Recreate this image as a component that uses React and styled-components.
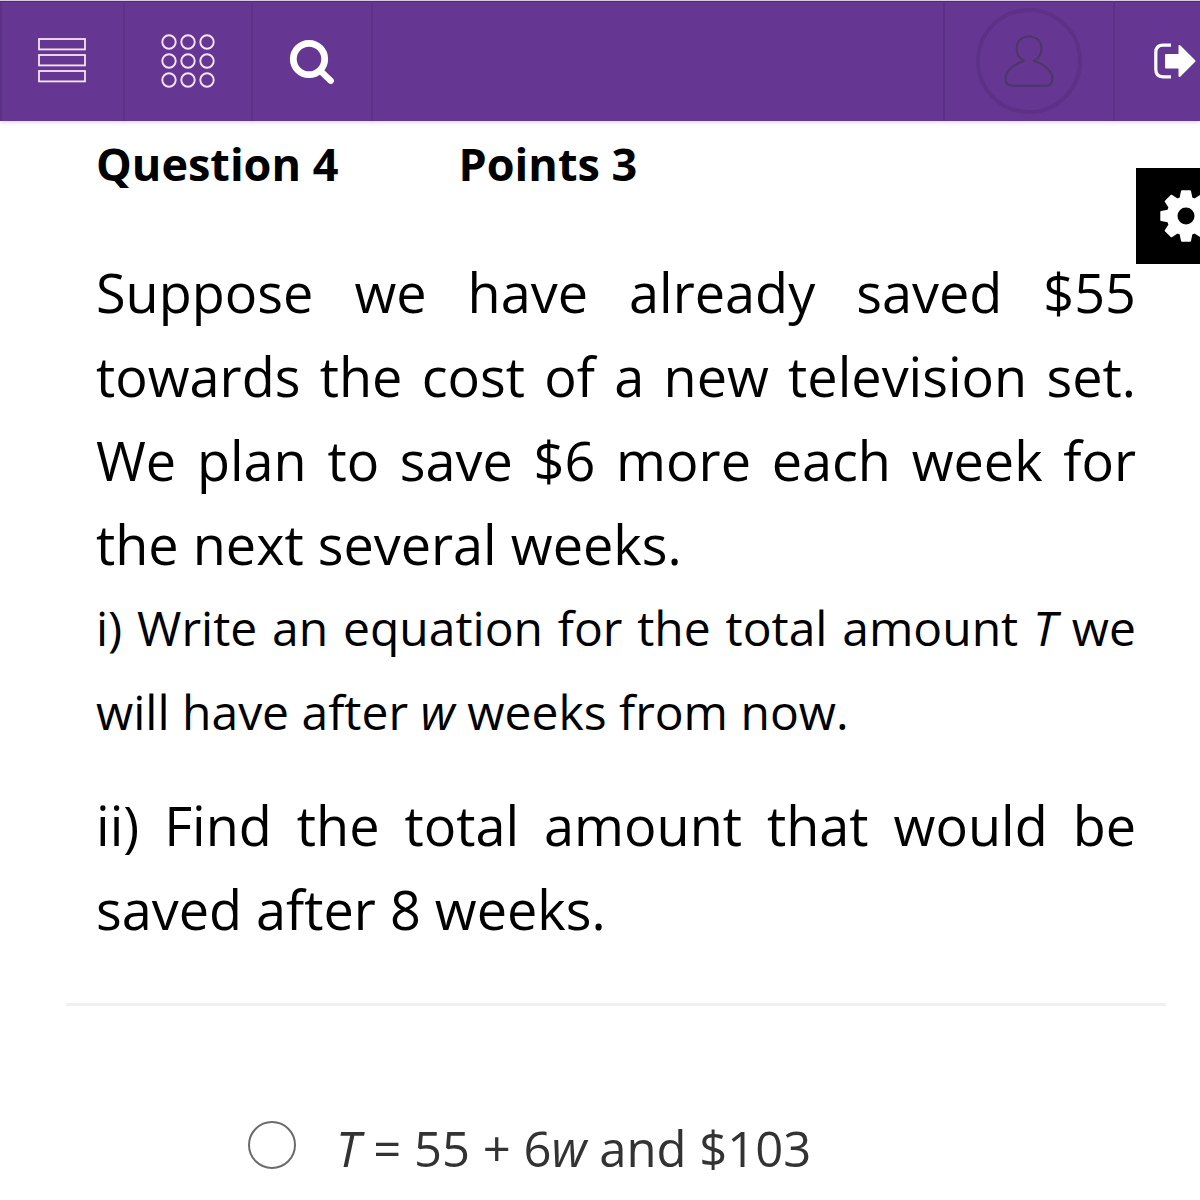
import React from 'react';
import styled, { createGlobalStyle } from 'styled-components'

const answers = [
    { id: 'a', variable: 'T', middle: '= 55 + 6', second: 'w', end: 'and $103' },
]

const teeth = [0, 45, 90, 135, 180, 225, 270, 315]
const dots = [8, 27, 46]

const ListIcon = () => (
    <svg width="48" height="46" viewBox="0 0 48 46" fill="none" stroke="#f8e4fa" strokeWidth="1.8">
        <rect x="1" y="1" width="46" height="10.4" />
        <rect x="1" y="17" width="46" height="10.4" />
        <rect x="1" y="33" width="46" height="10.4" />
    </svg>
)

const GridIcon = () => (
    <svg width="54" height="54" viewBox="0 0 54 54" fill="none" stroke="#f8e4fa" strokeWidth="1.9">
        {dots.map(y => dots.map(x => <circle key={x + '-' + y} cx={x} cy={y} r="6.7" />))}
    </svg>
)

const SearchIcon = () => (
    <svg width="46" height="46" viewBox="0 0 46 46" fill="none" stroke="#fff">
        <circle cx="20" cy="21" r="15.7" strokeWidth="6.8" />
        <path d="M32 33.5 L41.7 42.7" strokeWidth="6.4" strokeLinecap="round" />
    </svg>
)

const UserIcon = () => (
    <svg width="50" height="54" viewBox="0 0 50 54" fill="none" stroke="#4d3763" strokeWidth="2" strokeLinejoin="round">
        <path d="M20.5 26.8 C15 24.5 12.5 20 12.5 14.6 C12.5 7.2 17.6 2.4 25 2.4 C32.4 2.4 37.5 7.2 37.5 14.6 C37.5 20 35 24.5 29.5 26.8 C41.5 30.5 48.5 38 48.5 44.5 C48.5 49.5 46 51.8 41 51.8 H9 C4 51.8 1.5 49.5 1.5 44.5 C1.5 38 8.5 30.5 20.5 26.8" />
    </svg>
)

const LogoutIcon = () => (
    <svg width="42" height="36" viewBox="0 0 42 36">
        <path d="M17 2.2 H9 Q1.8 2.2 1.8 9.4 V26.6 Q1.8 33.8 9 33.8 H17" fill="none" stroke="#fff" strokeWidth="3.2" />
        <path d="M12 12 H25.5 V3 L40.5 18 L25.5 33 V24.5 H12 Z" fill="#fff" stroke="#fff" strokeWidth="2" strokeLinejoin="round" />
    </svg>
)

const GearIcon = () => (
    <svg width="52" height="52" viewBox="-26 -26 52 52" fill="#fff">
        <circle r="19.5" />
        {teeth.map(angle => (
            <path key={angle} d="M-6.6 -17 L-5 -25 Q-4.8 -25.7 -4 -25.7 H4 Q4.8 -25.7 5 -25 L6.6 -17 Z" transform={`rotate(${angle})`} />
        ))}
        <circle r="8.5" fill="#000" />
    </svg>
)

function TopBar() {
    return (
        <Bar>
            <BarButton $width={125} aria-label="Menu"><ListIcon /></BarButton>
            <BarButton $width={128} aria-label="Apps"><GridIcon /></BarButton>
            <BarButton $width={120} aria-label="Search"><SearchIcon /></BarButton>
            <Spacer />
            <BarButton $width={170} aria-label="Profile">
                <Avatar><UserIcon /></Avatar>
            </BarButton>
            <LogoutButton $width={85} aria-label="Log out"><LogoutIcon /></LogoutButton>
        </Bar>
    )
}

function App() {
    return (
        <Page>
            <GlobalStyle />
            <TopBar />
            <Settings aria-label="Settings"><GearIcon /></Settings>
            <Content>
                <Heading>
                    <span>Question 4</span>
                    <span>Points 3</span>
                </Heading>
                <Question>
                    <Text>
                        Suppose we have already saved $55 towards the cost of a new television set. We plan
                        to save $6 more each week for the next several weeks.
                    </Text>
                    <SmallText>
                        i) Write an equation for the total amount <Variable>T</Variable> we will have
                        after <Variable>w</Variable> weeks from now.
                    </SmallText>
                    <Text>
                        ii) Find the total amount that would be saved after 8 weeks.
                    </Text>
                </Question>
                <Divider />
                {answers.map(answer => (
                    <Answer key={answer.id}>
                        <Radio type="radio" name="answer" value={answer.id} />
                        <span>
                            <Variable>{answer.variable}</Variable> {answer.middle}<Variable>{answer.second}</Variable> {answer.end}
                        </span>
                    </Answer>
                ))}
            </Content>
        </Page>
    )
}

export default App

const GlobalStyle = createGlobalStyle`
* {
    box-sizing: border-box;
}
body {
    margin: 0;
    background: #fff;
    font-family: "Open Sans", "Noto Sans", sans-serif;
    color: #000;
}
`
const Page = styled.div`
position: relative;
overflow: hidden;
`
const Bar = styled.header`
display: flex;
height: 121px;
background: #653793;
border-top: 1px solid #d8c8e6;
box-shadow: 0 1px 4px rgba(101, 55, 147, 0.25), inset 0 1px 0 #4b2d69, inset 2px 0 0 #5e3189;
`
const BarButton = styled.button`
display: flex;
align-items: center;
justify-content: center;
flex: none;
width: ${props => props.$width}px;
padding: 0;
background: none;
border: 0;
border-right: 2px solid #5e3189;
cursor: pointer;
`
const LogoutButton = styled(BarButton)`
justify-content: flex-end;
padding-right: 4px;
border-right: 0;
`
const Spacer = styled.div`
flex: 1;
border-right: 2px solid #5e3189;
`
const Avatar = styled.span`
display: grid;
place-items: center;
width: 106px;
height: 106px;
border: 4px solid #5d3186;
border-radius: 50%;
`
const Settings = styled.button`
position: absolute;
top: 168px;
right: -32px;
display: grid;
place-items: center;
width: 96px;
height: 96px;
padding: 0 0 0 4px;
background: #000;
border: 0;
cursor: pointer;
`
const Content = styled.main`
padding: 11px 34px 0 66px;
`
const Heading = styled.h1`
display: flex;
gap: 120px;
margin: 0;
padding: 0 30px;
font-size: 45px;
line-height: 64px;
font-weight: 700;
`
const Question = styled.section`
margin-top: 54px;
padding: 0 30px;
text-align: justify;
`
const Text = styled.p`
margin: 0;
font-size: 54px;
line-height: 84px;
`
const SmallText = styled.p`
margin: 0 0 29px;
font-size: 48px;
line-height: 84px;
`
const Variable = styled.i`
font-weight: 500;
`
const Divider = styled.hr`
height: 3px;
margin: 52px 0 0;
background: #f0f0f0;
border: 0;
`
const Answer = styled.label`
display: flex;
align-items: flex-start;
gap: 40px;
margin: 106px 0 0 182px;
color: #333;
font-size: 49px;
line-height: 72px;
cursor: pointer;
`
const Radio = styled.input`
appearance: none;
width: 48px;
height: 48px;
margin: 9px 0 0;
background: #fff;
border: 2px solid #6b6b6b;
border-radius: 50%;
&:checked {
    border-width: 14px;
}
`
